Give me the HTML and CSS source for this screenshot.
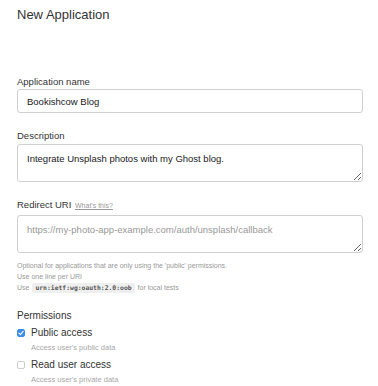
FILE: index.html
```html
<!DOCTYPE html>
<html lang="en">
<head>
    <meta charset="UTF-8">
    <title>New Application</title>
    <link rel="stylesheet" href="styles.css">
</head>
<body>
    <div class="container">
        <h1 class="title">New Application</h1>

        <form class="app-form">
            <div class="field">
                <label class="label" for="appName">Application name</label>
                <input class="input" id="appName" type="text" value="Bookishcow Blog">
            </div>

            <div class="field">
                <label class="label" for="appDesc">Description</label>
                <textarea class="input textarea" id="appDesc">Integrate Unsplash photos with my Ghost blog.</textarea>
            </div>

            <div class="field">
                <label class="label" for="redirect">Redirect URI <a class="help-link" href="#">What's this?</a></label>
                <textarea class="input textarea textarea-tall" id="redirect" placeholder="https://my-photo-app-example.com/auth/unsplash/callback"></textarea>
                <div class="hint">
                    <div>Optional for applications that are only using the 'public' permissions.</div>
                    <div>Use one line per URI</div>
                    <div>Use <code class="code">urn:ietf:wg:oauth:2.0:oob</code> for local tests</div>
                </div>
            </div>

            <div class="permissions">
                <div class="perm-title">Permissions</div>

                <div class="perm">
                    <label class="perm-row">
                        <span class="checkbox checked">
                            <svg viewBox="0 0 10 10" width="6" height="6"><path d="M1.5 5.2 L4 7.6 L8.6 2.4" fill="none" stroke="#fff" stroke-width="1.8" stroke-linecap="round" stroke-linejoin="round"/></svg>
                        </span>
                        Public access
                    </label>
                    <div class="perm-desc">Access user's public data</div>
                </div>

                <div class="perm">
                    <label class="perm-row">
                        <span class="checkbox"></span>
                        Read user access
                    </label>
                    <div class="perm-desc">Access user's private data</div>
                </div>
            </div>
        </form>
    </div>
</body>
</html>
```

FILE: styles.css
```css
:root {
    --text-dark: #333333;
    --text-input: #1a1a1a;
    --text-muted: #999999;
    --text-faint: #a8a8a8;
    --border: #d0d0d0;
    --accent-blue: #3d8ee8;
}
* {
    margin: 0;
    padding: 0;
    box-sizing: border-box;
}
body {
    font-family: 'Liberation Sans', Arial, sans-serif;
    background-color: #ffffff;
    color: var(--text-dark);
}
.container {
    width: 346px;
    margin-left: 17px;
}
.title {
    margin-top: 7px;
    font-size: 13px;
    line-height: 16px;
    font-weight: 400;
    color: var(--text-dark);
}
.app-form {
    margin-top: 53px;
}
.field {
    display: flex;
    flex-direction: column;
    margin-bottom: 17px;
}
.label {
    font-size: 9.5px;
    line-height: 12px;
    margin-bottom: 1px;
    color: var(--text-dark);
}
.help-link {
    font-size: 7px;
    color: var(--text-muted);
    margin-left: 1px;
}
.input {
    width: 100%;
    height: 24px;
    padding: 0 9px;
    border: 1px solid var(--border);
    border-radius: 3px;
    font-family: 'Liberation Sans', Arial, sans-serif;
    font-size: 9.5px;
    color: var(--text-input);
    background-color: #ffffff;
    outline: none;
}
.textarea {
    height: 38px;
    padding: 8px 9px;
    line-height: 12px;
    resize: vertical;
    margin-top: 1px;
}
.textarea-tall {
    margin-top: 2px;
}
.textarea::placeholder {
    color: var(--text-muted);
}
.hint {
    margin-top: 7px;
    font-size: 7px;
    line-height: 11px;
    color: var(--text-muted);
}
.code {
    font-family: 'DejaVu Sans Mono', monospace;
    font-size: 6.4px;
    font-weight: 700;
    color: #555555;
    background-color: #efefef;
    padding: 1px 3px;
    margin: 0 1px;
    border-radius: 2px;
}
.permissions {
    margin-top: -1px;
}
.perm-title {
    font-size: 10px;
    line-height: 12px;
    color: var(--text-dark);
    margin-bottom: 5px;
}
.perm {
    margin-bottom: 6px;
}
.perm-row {
    display: flex;
    align-items: center;
    gap: 6px;
    font-size: 10px;
    line-height: 12px;
    color: var(--text-dark);
}
.checkbox {
    width: 8px;
    height: 8px;
    border: 1px solid #cccccc;
    border-radius: 2px;
    background-color: #ffffff;
    display: flex;
    align-items: center;
    justify-content: center;
}
.checkbox.checked {
    background-color: var(--accent-blue);
    border-color: var(--accent-blue);
}
.perm-desc {
    margin-top: 4px;
    margin-left: 14px;
    font-size: 7.5px;
    line-height: 10px;
    color: var(--text-faint);
}
```
